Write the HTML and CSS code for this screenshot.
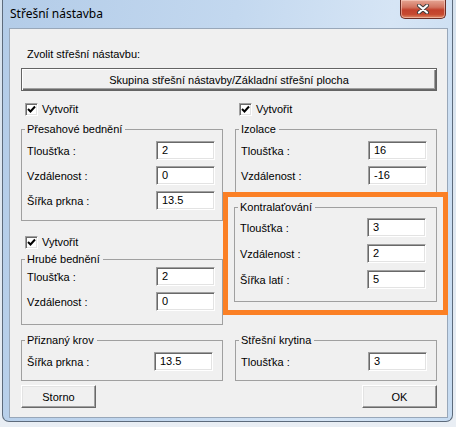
FILE: index.html
```html
<!DOCTYPE html>
<html lang="cs">
<head>
<meta charset="utf-8">
<title>Střešní nástavba</title>
<link rel="stylesheet" href="styles.css">
</head>
<body>
<div class="window">
  <div class="titlebar">
    <span class="title">Střešní nástavba</span>
    <div class="close">
      <svg width="14" height="10" viewBox="0 0 14 10">
        <path d="M3 1.5 L11 8.5 M11 1.5 L3 8.5" stroke="#3b3b3b" stroke-width="4" stroke-linecap="round"/>
        <path d="M3 1.5 L11 8.5 M11 1.5 L3 8.5" stroke="#ffffff" stroke-width="2.2" stroke-linecap="round"/>
      </svg>
    </div>
  </div>
  <div class="client">
    <div class="prompt">Zvolit střešní nástavbu:</div>
    <button class="btn btn-default">Skupina střešní nástavby/Základní střešní plocha</button>
    <div class="columns">
      <div class="col">
        <label class="check"><span class="box"><svg width="9" height="9" viewBox="0 0 9 9"><path d="M1 4 L3.5 6.5 L8 1.5" fill="none" stroke="#000" stroke-width="2"/></svg></span>Vytvořit</label>
        <fieldset class="group g-top">
          <legend>Přesahové bednění</legend>
          <div class="row"><span class="lbl lbl-wide">Tloušťka :</span><span class="input">2</span></div>
          <div class="row"><span class="lbl lbl-wide">Vzdálenost :</span><span class="input">0</span></div>
          <div class="row"><span class="lbl lbl-wide">Šířka prkna :</span><span class="input">13.5</span></div>
        </fieldset>
        <label class="check check-2"><span class="box"><svg width="9" height="9" viewBox="0 0 9 9"><path d="M1 4 L3.5 6.5 L8 1.5" fill="none" stroke="#000" stroke-width="2"/></svg></span>Vytvořit</label>
        <fieldset class="group g-hrube">
          <legend>Hrubé bednění</legend>
          <div class="row"><span class="lbl lbl-wide">Tloušťka :</span><span class="input">2</span></div>
          <div class="row"><span class="lbl lbl-wide">Vzdálenost :</span><span class="input">0</span></div>
        </fieldset>
        <fieldset class="group g-bottom">
          <legend>Přiznaný krov</legend>
          <div class="row"><span class="lbl">Šířka prkna :</span><span class="input">13.5</span></div>
        </fieldset>
      </div>
      <div class="col">
        <label class="check"><span class="box"><svg width="9" height="9" viewBox="0 0 9 9"><path d="M1 4 L3.5 6.5 L8 1.5" fill="none" stroke="#000" stroke-width="2"/></svg></span>Vytvořit</label>
        <fieldset class="group g-top g-izolace">
          <legend>Izolace</legend>
          <div class="row"><span class="lbl">Tloušťka :</span><span class="input">16</span></div>
          <div class="row"><span class="lbl">Vzdálenost :</span><span class="input">-16</span></div>
        </fieldset>
        <div class="highlight">
          <fieldset class="group g-kontra">
            <legend>Kontralaťování</legend>
            <div class="row"><span class="lbl">Tloušťka :</span><span class="input">3</span></div>
            <div class="row"><span class="lbl">Vzdálenost :</span><span class="input">2</span></div>
            <div class="row"><span class="lbl">Šířka latí :</span><span class="input">5</span></div>
          </fieldset>
        </div>
        <fieldset class="group g-bottom g-krytina">
          <legend>Střešní krytina</legend>
          <div class="row"><span class="lbl">Tloušťka :</span><span class="input">3</span></div>
        </fieldset>
      </div>
    </div>
    <div class="actions">
      <button class="btn btn-small">Storno</button>
      <button class="btn btn-small">OK</button>
    </div>
  </div>
</div>
</body>
</html>
```

FILE: styles.css
```css
html, body {
  margin: 0;
  padding: 0;
}
body {
  width: 456px;
  height: 427px;
  overflow: hidden;
  background: linear-gradient(to bottom, #d6e2ee, #e9eef4);
  font-family: "Liberation Sans", Arial, sans-serif;
  font-size: 11px;
  color: #000;
}
.window {
  margin-left: 2px;
  width: 451px;
  height: 422px;
  border: 1px solid #5d6b7c;
  border-top: none;
  border-radius: 0 0 7px 7px;
  background: linear-gradient(100deg, #b3cce8 0%, #c3d8ef 45%, #d6e5f5 75%, #c6dbf1 100%);
  padding: 0 6px 0 6px;
  box-sizing: border-box;
  display: flex;
  flex-direction: column;
}
.titlebar {
  height: 28px;
  display: flex;
  align-items: flex-start;
  padding-left: 1px;
}
.title {
  font-family: "Noto Sans", "Open Sans", sans-serif;
  font-size: 12px;
  line-height: 16px;
  margin-top: 6px;
  color: #000;
}
.close {
  margin-left: auto;
  width: 46px;
  height: 19px;
  box-sizing: border-box;
  border: 1px solid #6b2d25;
  border-top: none;
  border-radius: 0 0 5px 5px;
  background: linear-gradient(to bottom, #e5a593 0%, #d27460 40%, #c2412c 55%, #c64a30 80%, #df8b66 100%);
  box-shadow: inset 0 0 0 1px rgba(255, 220, 210, 0.5);
  display: flex;
  align-items: center;
  justify-content: center;
}
.client {
  width: 439px;
  height: 390px;
  box-sizing: border-box;
  border: 1px solid #98a7b9;
  background: #f0f0f0;
  padding: 19px 9px 0 11px;
}
.prompt {
  margin-left: 6px;
  line-height: 13px;
  height: 13px;
}
.btn {
  font-family: inherit;
  font-size: 11px;
  color: #000;
  background: #f0f0f0;
  border: 1px solid;
  border-color: #fff #696969 #696969 #fff;
  box-shadow: inset -1px -1px 0 #a0a0a0, inset 1px 1px 0 #e3e3e3;
  padding: 0;
  margin: 0;
  height: 23px;
  display: block;
}
.btn-default {
  margin-top: 7px;
  width: 416px;
  border: 1px solid #646464;
  box-shadow: inset 1px 1px 0 #fff, inset -1px -1px 0 #696969, inset -2px -2px 0 #a0a0a0;
}
.btn-small {
  width: 75px;
}
.columns {
  display: grid;
  grid-template-columns: 202px 202px;
  column-gap: 12px;
  margin-top: 12px;
}
.col {
  display: flex;
  flex-direction: column;
}
.check {
  display: flex;
  align-items: center;
  height: 13px;
  line-height: 13px;
  padding-left: 4px;
  gap: 4px;
}
.check-2 {
  margin-top: 15px;
}
.box {
  width: 13px;
  height: 13px;
  box-sizing: border-box;
  background: #fff;
  border: 1px solid;
  border-color: #a0a0a0 #fff #fff #a0a0a0;
  box-shadow: inset 1px 1px 0 #696969, inset -1px -1px 0 #e3e3e3;
  display: flex;
  align-items: center;
  justify-content: center;
}
.group {
  margin: 0;
  border: 1px solid #a0a0a0;
  padding: 5px 0 0 5px;
  min-width: 0;
}
.group legend {
  padding: 0 3px 0 2px;
  margin-left: -2px;
  line-height: 13px;
  height: 13px;
}
.g-top {
  margin-top: 7px;
  padding-bottom: 10px;
}
.g-izolace {
  border-bottom: none;
  padding-bottom: 7px;
}
.g-hrube {
  margin-top: 4px;
  padding-top: 1px;
  padding-bottom: 13px;
}
.g-bottom {
  margin-top: 9px;
  padding-bottom: 9px;
}
.g-krytina {
  margin-top: 19px;
}
.g-kontra {
  padding-top: 4px;
  padding-bottom: 12px;
}
.g-kontra .row + .row {
  margin-top: 7px;
}
.highlight {
  margin: 0 -11px 0 -12px;
  border: 5px solid #fb8025;
  padding: 4px 6px 8px 6px;
}
.row {
  display: flex;
  align-items: center;
  height: 19px;
}
.row + .row {
  margin-top: 6px;
}
.lbl {
  width: 127px;
  flex: none;
}
.lbl-wide {
  width: 129px;
}
.input {
  width: 59px;
  height: 19px;
  box-sizing: border-box;
  background: #fff;
  border: 1px solid;
  border-color: #a0a0a0 #fff #fff #a0a0a0;
  box-shadow: inset 1px 1px 0 #696969, inset -1px -1px 0 #e3e3e3;
  padding-left: 5px;
  line-height: 17px;
}
.actions {
  display: flex;
  justify-content: space-between;
  margin-top: 4px;
  width: 416px;
}
```
